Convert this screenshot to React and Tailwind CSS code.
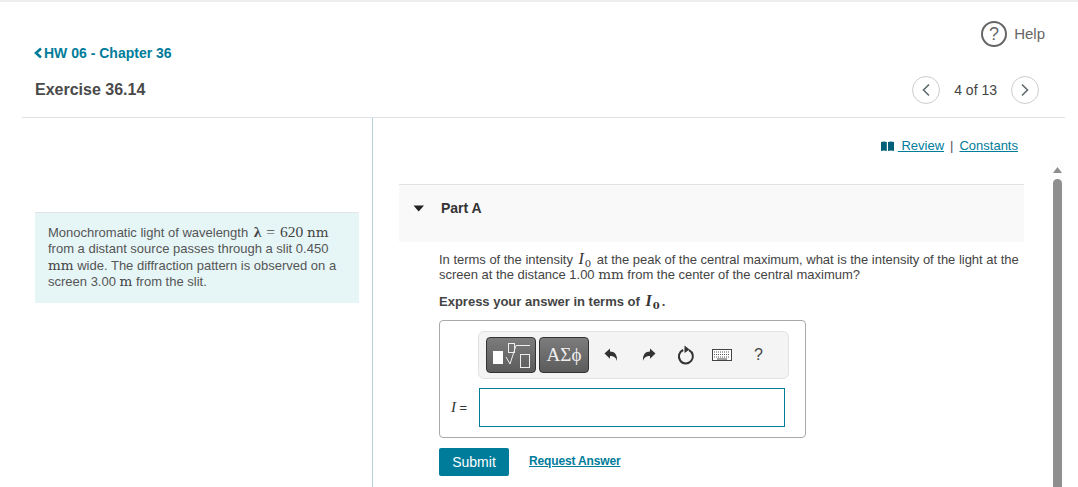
import React from 'react'

// upright math units (nm, mm, m) set in a wide serif
const Unit = ({ children }) => (
    <span className="font-['DejaVu_Serif',serif] text-[13.5px] leading-none text-[#444]">{children}</span>
)

const IZero = () => (
    <span className="mx-[2px] font-['Liberation_Serif',serif] text-[16px] leading-none text-[#333]">
        <i>I</i><span className="relative top-[3px] ml-[1px] font-['DejaVu_Serif',serif] text-[10px] leading-none not-italic">0</span>
    </span>
)

const RoundNav = ({ dir }) => (
    <button className="flex h-[28px] w-[28px] items-center justify-center rounded-full border border-[#ccc] bg-white">
        <svg width="10" height="14" viewBox="0 0 10 14" fill="none" stroke="#5f6b6f" strokeWidth="1.6">
            {dir === 'left' ? <path d="M8 1.5 L2.5 7 L8 12.5" /> : <path d="M2 1.5 L7.5 7 L2 12.5" />}
        </svg>
    </button>
)

const Toolbar = () => (
    <div className="flex h-[48px] w-[311px] items-center rounded-[6px] border border-[#e2e2e2] bg-[#f4f4f4] pl-[7px]">
        <button className="flex h-[36px] w-[50px] items-center justify-center rounded-[4px] border border-[#333] bg-gradient-to-b from-[#7c7c7c] to-[#5c5c5c]">
            <svg width="40" height="30" viewBox="0 0 40 30" fill="none">
                <rect x="2" y="11" width="10" height="13" fill="#fff" />
                <rect x="17.5" y="3.5" width="6" height="9" stroke="#eee" strokeWidth="1" />
                <path d="M15 17 L19 24 L25 5.5 H39" stroke="#eee" strokeWidth="1" />
                <rect x="29.5" y="14.5" width="9" height="13" stroke="#eee" strokeWidth="1" />
            </svg>
        </button>
        <button className="ml-[3px] flex h-[36px] w-[50px] items-center justify-center rounded-[4px] border border-[#333] bg-gradient-to-b from-[#7c7c7c] to-[#5c5c5c] font-['Liberation_Serif',serif] text-[19px] text-[#eee]">
            ΑΣϕ
        </button>
        {/* undo */}
        <svg className="ml-[15px]" width="14" height="14" viewBox="0 0 14 14" fill="#333">
            <path d="M0.5 5.5 L6 0.5 V3.5 C10.5 3.5 13.5 6.5 13 13 C12 9.5 10 8 6 8 V10.8 Z" />
        </svg>
        {/* redo */}
        <svg className="ml-[24px]" width="14" height="14" viewBox="0 0 14 14" fill="#333">
            <path d="M13.5 5.5 L8 0.5 V3.5 C3.5 3.5 0.5 6.5 1 13 C2 9.5 4 8 8 8 V10.8 Z" />
        </svg>
        {/* reset */}
        <svg className="ml-[21px]" width="18" height="20" viewBox="0 0 18 20" fill="none">
            <path d="M6.2 5 A7 7 0 1 0 12 5.2" stroke="#333" strokeWidth="2" />
            <path d="M7.5 0.5 L12.5 4.5 L7.5 8 Z" fill="#333" />
        </svg>
        {/* keyboard */}
        <svg className="ml-[17px]" width="20" height="12" viewBox="0 0 20 12" fill="none">
            <rect x="0.5" y="0.5" width="19" height="11" fill="#fff" stroke="#444" />
            <path d="M2 3 H18 M2 5.5 H18 M2 8 H18" stroke="#555" strokeWidth="1.2" strokeDasharray="1 1" />
            <path d="M5 10 H15" stroke="#444" />
        </svg>
        <span className="ml-[22px] text-[16px] text-[#444]">?</span>
    </div>
)

export default function App() {
    return (
        <div className="relative h-[487px] w-[1078px] overflow-hidden border-t-2 border-[#eeeeee] bg-white font-['Liberation_Sans',Arial,sans-serif] text-[13px] text-[#444]">
            {/* Help */}
            <div className="flex h-[45px] items-end justify-end pr-[33px]">
                <div className="flex items-center gap-[7px]">
                    <svg width="26" height="26" viewBox="0 0 26 26" fill="none">
                        <circle cx="13" cy="13" r="12" stroke="#666" strokeWidth="2" />
                        <text x="13" y="19" textAnchor="middle" fontSize="18" fill="#666" fontFamily="Liberation Sans">?</text>
                    </svg>
                    <span className="text-[15px] text-[#666]">Help</span>
                </div>
            </div>

            {/* Header */}
            <div className="ml-[22px] mr-[13px] flex h-[71px] items-start justify-between border-b border-[#dfe3e6] pl-[13px] pr-[26px]">
                <div>
                    <a className="-ml-[2px] -mt-[2px] flex items-center text-[14px] leading-[16px] font-bold text-[#007c9b]">
                        <svg className="mr-[1px]" width="10" height="12" viewBox="0 0 10 12" fill="none" stroke="#007c9b" strokeWidth="2.6">
                            <path d="M8 1.5 L3 6 L8 10.5" />
                        </svg>
                        HW 06 - Chapter 36
                    </a>
                    <h1 className="mt-[20px] text-[16px] leading-[18px] font-bold text-[#4a4a4a]">Exercise 36.14</h1>
                </div>
                <div className="mt-[29px] flex items-center">
                    <RoundNav dir="left" />
                    <span className="mx-[14px] text-[14px] text-[#444]">4 of 13</span>
                    <RoundNav dir="right" />
                </div>
            </div>

            {/* Body */}
            <div className="ml-[22px] flex h-[369px]">
                <div className="w-[351px] border-r border-[#b9d3de] px-[13px] pt-[94px]">
                    <div className="h-[91px] border-t border-[#e2e6e8] bg-[#e6f6f7] px-[13px] pt-[11px] text-[#555]">
                        <p className="whitespace-nowrap leading-[16.4px]">
                            Monochromatic light of wavelength{' '}
                            <span className="ml-[2px] font-['Liberation_Serif',serif] text-[15.5px] leading-none text-[#444]">
                                <b>λ</b> <span className="mx-[1px]">=</span> 620 <Unit>nm</Unit>
                            </span>
                            <br />
                            from a distant source passes through a slit 0.450
                            <br />
                            <Unit>mm</Unit> wide. The diffraction pattern is observed on a
                            <br />
                            screen 3.00 <Unit>m</Unit> from the slit.
                        </p>
                    </div>
                </div>

                <div className="w-[652px] pl-[26px]">
                    <div className="flex h-[20px] items-start justify-end pr-[7px] pt-[20px] leading-[16px]">
                        <div className="flex items-center">
                            <svg width="13" height="10" viewBox="0 0 13 10" fill="#00607a">
                                <path d="M0 1 Q3 0 5.8 1 V10 Q3 9 0 10 Z M7 1 Q10 0 13 1 V10 Q10 9 7 10 Z" />
                            </svg>
                            <a className="ml-[4px] text-[#007c9b] underline">&nbsp;Review</a>
                            <span className="mx-[6px] text-[#555]">|</span>
                            <a className="text-[#007c9b] underline">Constants</a>
                        </div>
                    </div>

                    <div className="mt-[46px] flex h-[58px] w-[625px] border-t border-[#e2e2e2] bg-[#f9f9f9] pl-[14px] pt-[15px]">
                        <svg className="mt-[5px]" width="12" height="7" viewBox="0 0 12 7" fill="#222">
                            <path d="M0.5 0.5 H11 L5.7 6.5 Z" />
                        </svg>
                        <span className="ml-[16px] text-[14px] leading-[16px] font-bold text-[#333]">Part A</span>
                    </div>

                    <div className="pl-[40px] pt-[9px]">
                        <p className="whitespace-nowrap text-[13px] leading-[15px] tracking-[-0.02px] text-[#444]">
                            In terms of the intensity <IZero /> at the peak of the central maximum, what is the intensity of the light at the
                            <br />
                            screen at the distance 1.00 <Unit>mm</Unit> from the center of the central maximum?
                        </p>
                        <p className="mt-[11px] text-[13px] leading-[16px] font-bold text-[#444]">
                            Express your answer in terms of <IZero />.
                        </p>

                        <div className="mt-[10px] h-[118px] w-[367px] rounded-[4px] border border-[#aaa] pl-[38px] pt-[10px]">
                            <Toolbar />
                            <div className="-ml-[27px] mt-[9px] flex items-center">
                                <span className="w-[28px] text-[13px] text-[#333]">
                                    <i className="font-['Liberation_Serif',serif] text-[15px]">I</i> =
                                </span>
                                <input className="h-[39px] w-[306px] border border-[#007c9b] bg-white outline-none" />
                            </div>
                        </div>

                        <div className="mt-[10px] flex items-start">
                            <button className="h-[28px] w-[70px] rounded-[2px] bg-[#007c9b] text-[14px] text-white">Submit</button>
                            <a className="ml-[20px] mt-[4px] text-[12px] font-bold tracking-[-0.15px] text-[#007c9b] underline">Request Answer</a>
                        </div>
                    </div>
                </div>
            </div>

            {/* Scrollbar */}
            <div className="absolute left-[1050px] top-[158px] flex h-[329px] w-[14px] flex-col items-center bg-[#fdfdfd]">
                <svg className="mt-[7px]" width="9" height="6" viewBox="0 0 9 6" fill="#8e8e8e">
                    <path d="M4.5 0 L9 6 H0 Z" />
                </svg>
                <div className="mt-[6px] w-[9px] flex-1 rounded-t-full bg-[#8e8e8e]" />
            </div>
        </div>
    )
}
